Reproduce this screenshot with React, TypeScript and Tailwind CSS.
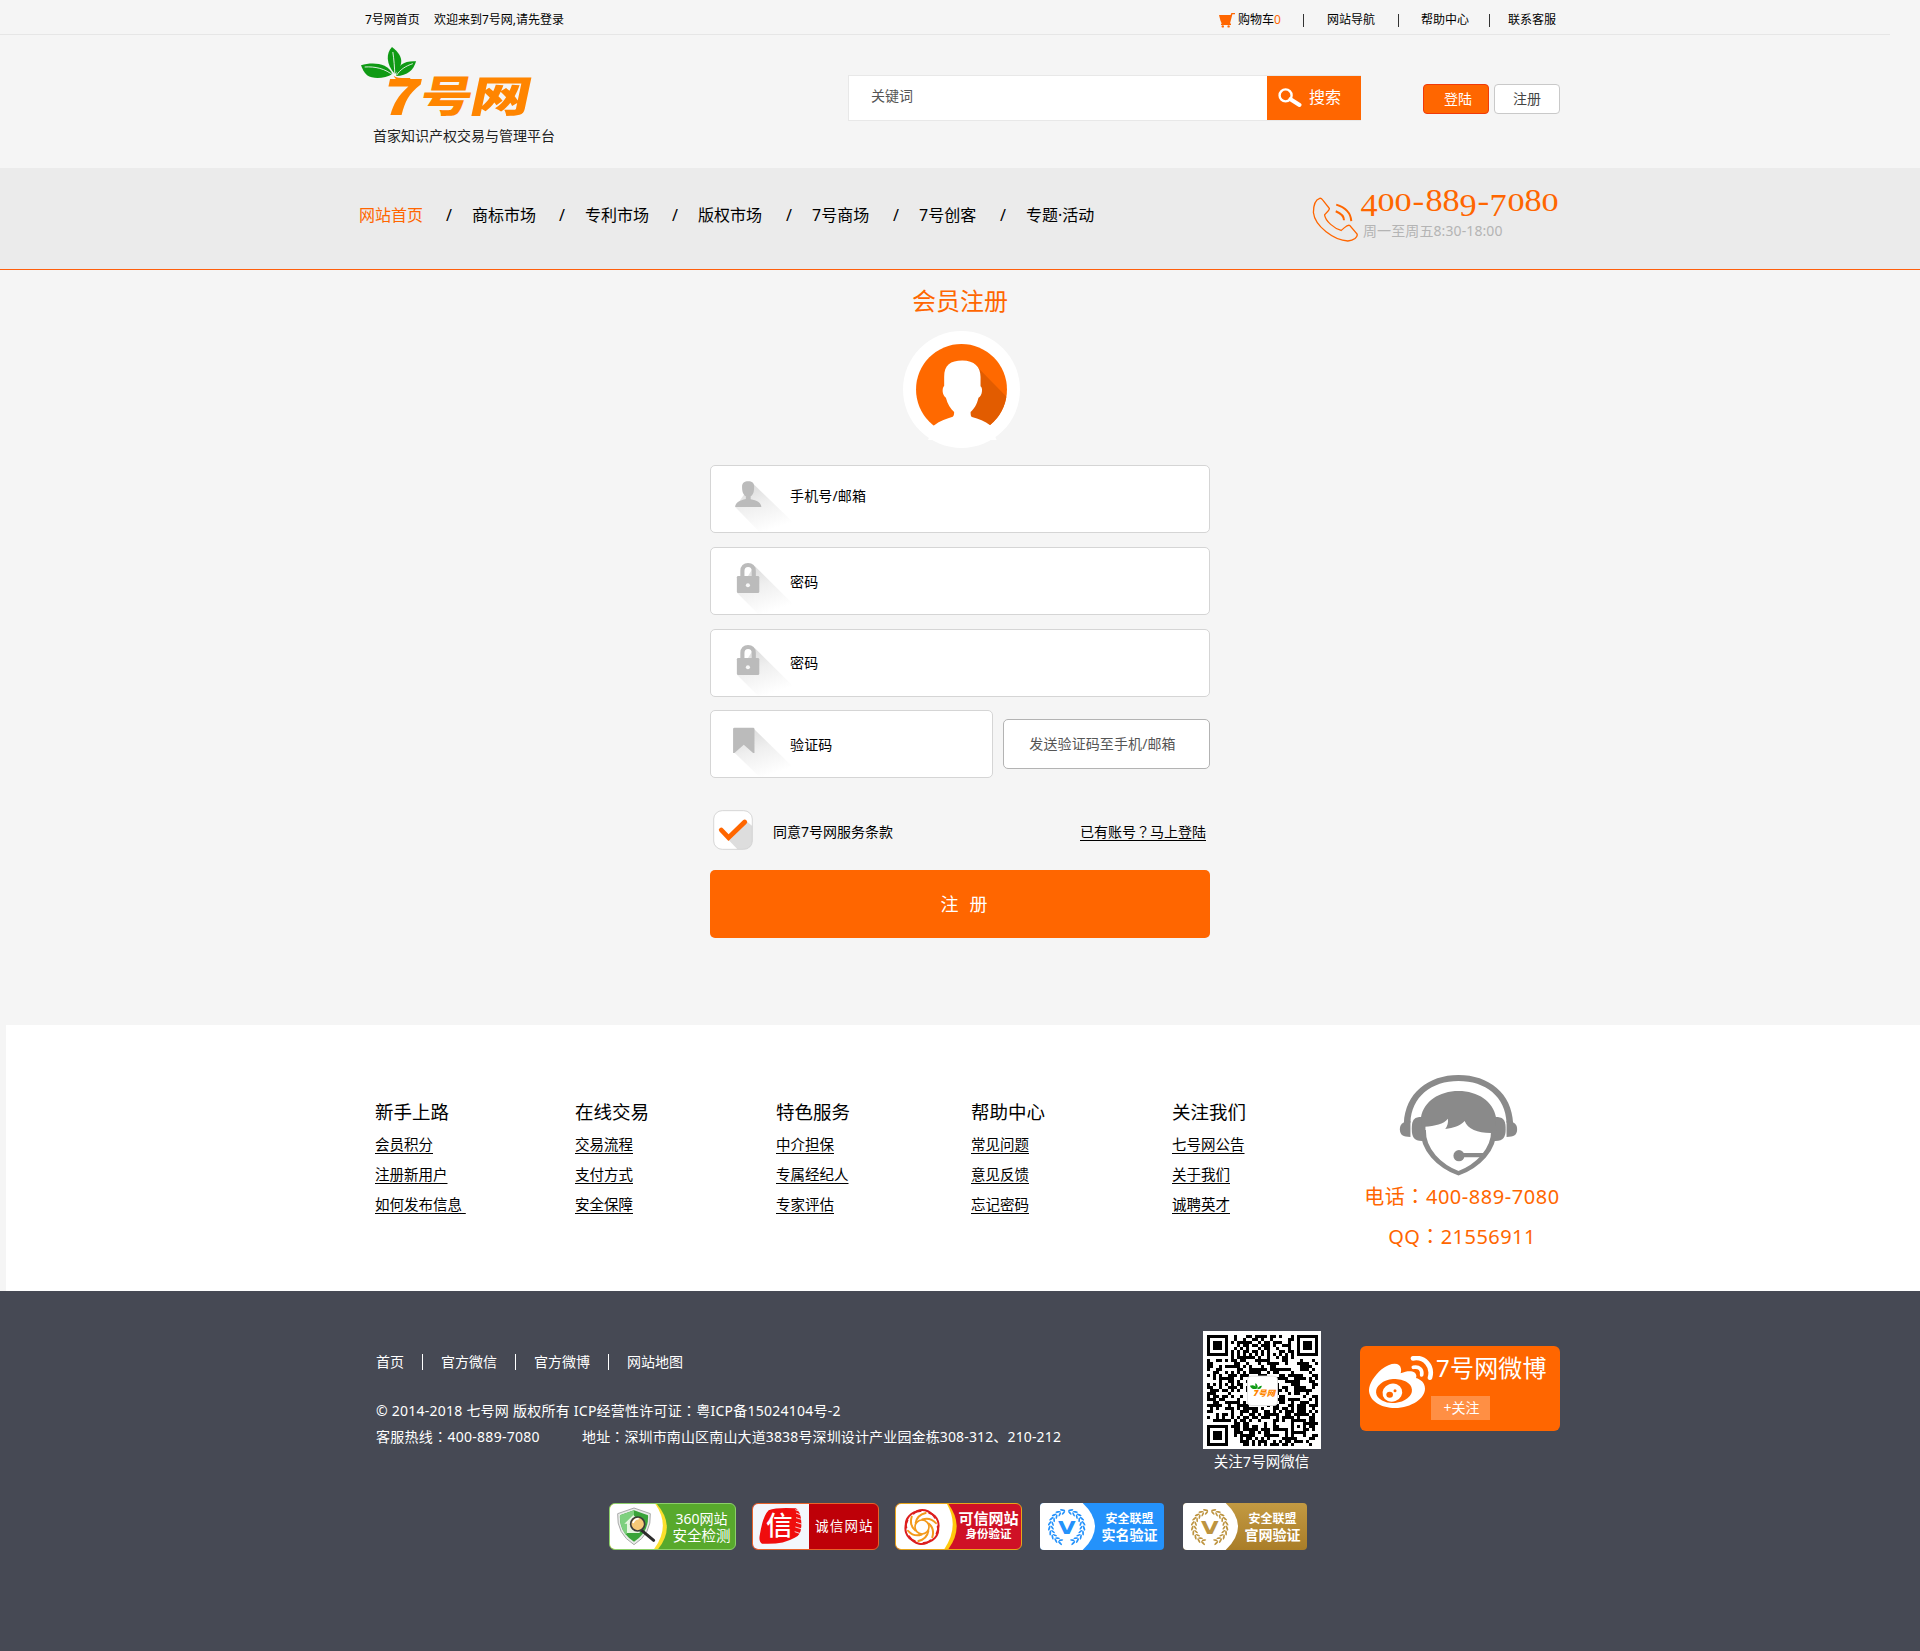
import React from "react";

const FONT = "font-['Noto_Sans','Noto_Sans_CJK_SC',sans-serif]";

function CartIcon() {
  return (
    <svg className="h-[15px] w-4" viewBox="0 0 16 15" fill="#ff6600">
      <path d="M0 2h11.6L12.4 0H16v1.2h-2.6L11 10.6h1V12H2v-1.2h.8L1.4 7.6Z" />
      <circle cx="3.8" cy="13.4" r="1.2" />
      <circle cx="9.6" cy="13.4" r="1.2" />
    </svg>
  );
}

function Leaves() {
  return (
    <svg className="absolute left-[1px] top-[12px] h-[40px] w-[70px]" viewBox="51 141 171.5 120" preserveAspectRatio="none">
      <g fill="#0f9a14">
        <path d="M51 196C78 186 116 188 128 222C110 236 80 238 66 226C58 218 54 206 51 196Z" />
        <path d="M127 141C112 160 112 192 134 222C152 198 160 172 127 141Z" />
        <path d="M186 184C158 182 138 194 137 228C165 228 180 210 186 184Z" />
      </g>
      <path d="M60 201C85 199 110 205 132 228M129 156C132 180 133 200 134 226M178 191C160 198 146 210 138 226" fill="none" stroke="#f5f5f5" strokeWidth="2.4" />
      <path d="M131 227C138 235 152 234 172 234L169 247C146 248 136 240 131 227Z" fill="#ff8500" />
    </svg>
  );
}

function SearchIcon() {
  return (
    <svg className="h-5 w-6" viewBox="0 0 24 20" fill="none" stroke="#fff">
      <ellipse cx="7.6" cy="7.4" rx="6" ry="6" strokeWidth="2.4" />
      <path d="M12.5 11.2L21.5 17" strokeWidth="4" strokeLinecap="round" />
    </svg>
  );
}

function PhoneIcon() {
  return (
    <svg className="h-[48px] w-[51px]" viewBox="990 588 105 145" preserveAspectRatio="none" fill="none" stroke="#ff6600">
      <path vectorEffect="non-scaling-stroke" strokeWidth="1.3" d="M1010 595C1000 600 997 615 997 638C1000 680 1040 722 1068 724C1080 722 1089 712 1087 703L1072 677C1067 673 1063 682 1054 692C1040 686 1022 665 1020 645C1022 640 1030 632 1030 626L1016 600C1014 596 1012 594 1010 595Z" />
      <path vectorEffect="non-scaling-stroke" strokeWidth="2" d="M1044 614C1062 622 1074 640 1075 664M1043 634C1053 640 1060 648 1060 661" />
    </svg>
  );
}

function Avatar() {
  return (
    <svg className="h-[117px] w-[117px]" viewBox="617 152 341 352" preserveAspectRatio="none">
      <defs>
        <clipPath id="disc">
          <ellipse cx="787.5" cy="328" rx="132.5" ry="137" />
        </clipPath>
      </defs>
      <ellipse cx="787.5" cy="328" rx="170.5" ry="176" fill="#fff" />
      <ellipse cx="787.5" cy="328" rx="132.5" ry="137" fill="#ff6900" />
      <path clipPath="url(#disc)" d="M835 262L930 362V450H780V330Z" fill="#e25c00" />
      <path d="M737 290C737 255 755 241 790 241C825 241 843 260 843 290V318C850 322 849 345 837 353C832 375 825 385 814 396C814 405 815 410 818 411C838 416 855 424 872 436L890 480H690L707 436C725 422 745 415 762 410C766 408 766 400 766 396C755 385 747 372 742 353C731 345 730 325 737 317Z" fill="#fff" />
    </svg>
  );
}

type FieldKind = "user" | "lock" | "bookmark";

function FieldIcon({ kind, id }: { kind: FieldKind; id: string }) {
  return (
    <svg className="h-[66px] w-[79px] shrink-0 overflow-visible" viewBox="2 3 229 198" preserveAspectRatio="none">
      <defs>
        <linearGradient id={id} gradientUnits="userSpaceOnUse" x1="115" y1="60" x2="165" y2="205">
          <stop offset="0" stopColor="#dcdcdc" />
          <stop offset="0.4" stopColor="#efefef" />
          <stop offset="0.95" stopColor="#ffffff" />
        </linearGradient>
      </defs>
      {kind === "user" && (
        <>
          <path d="M122 54L268 200H142L72 126Z" fill={`url(#${id})`} />
          <path d="M110 49C121 49 127 54 127 65C127 80 125 88 117 94V103C135 106 147 112 148 126H72C73 112 85 106 103 102V94C95 88 92 80 92 65C92 54 99 49 110 49Z" fill="#bbb" />
        </>
      )}
      {kind === "lock" && (
        <>
          <path d="M128 56L268 200H138L78 138Z" fill={`url(#${id})`} />
          <path d="M93 92V72C93 60 100 54 109.500 54C119 54 126 60 126 72V92" fill="none" stroke="#bbb" strokeWidth="12" />
          <rect x="77" y="87" width="65" height="51" rx="4" fill="#bbb" />
          <circle cx="109" cy="115" r="6" fill="#f7f7f7" />
        </>
      )}
      {kind === "bookmark" && (
        <>
          <path d="M126 56L268 200H142L70 128Z" fill={`url(#${id})`} />
          <path d="M70 53H124Q128 53 128 57V129L124 129L97 104L70 129H66V57Q66 53 70 53Z" fill="#bbb" />
        </>
      )}
    </svg>
  );
}

function CheckMark() {
  return (
    <svg className="h-10 w-10" viewBox="67 570 116 120" preserveAspectRatio="none">
      <rect x="69" y="572" width="112" height="116" rx="25" fill="#fff" />
      <path d="M162 602L181 618V664Q178 688 156 688H138L110 658Z" fill="#ddd" />
      <rect x="69" y="572" width="112" height="116" rx="25" fill="none" stroke="#d0d0d0" strokeWidth="2.500" />
      <path d="M91 630L112 653L159 606" fill="none" stroke="#ff6600" strokeWidth="14" strokeLinecap="round" />
    </svg>
  );
}

function Headset() {
  return (
    <svg className="h-[104px] w-[119px]" viewBox="1134 72 270 312" preserveAspectRatio="none" fill="#8a8a8a">
      <path d="M1145 220C1148 130 1200 75 1269 75C1338 75 1390 130 1393 220L1378 218C1376 140 1330 93 1269 93C1208 93 1162 140 1160 218Z" />
      <path d="M1160 213C1140 215 1136 225 1136 238C1136 255 1143 261 1160 261Z" />
      <path d="M1378 213C1398 215 1402 225 1402 238C1402 255 1395 261 1378 261Z" />
      <path d="M1194 201H1180C1166 203 1163 215 1163 237C1163 262 1168 272 1186 273H1194Z" />
      <path d="M1345 201H1358C1373 203 1376 215 1376 237C1376 262 1371 272 1353 273H1345Z" />
      <path d="M1184 201C1190 155 1225 123 1269 123C1313 123 1348 155 1354 201V248C1320 252 1290 240 1283 213C1272 228 1258 234 1239 237C1244 228 1246 218 1245 206C1236 222 1215 228 1192 230L1184 235Z" />
      <path d="M1189 240C1188 300 1225 347 1269 370C1313 347 1350 300 1349 240" fill="none" stroke="#8a8a8a" strokeWidth="12" />
      <ellipse cx="1270" cy="317" rx="12.500" ry="17" />
      <path d="M1275 309H1332L1324 322H1275Z" />
    </svg>
  );
}

const N = 37;

function inFinder(x: number, y: number) {
  return (x < 8 && y < 8) || (x > N - 9 && y < 8) || (x < 8 && y > N - 9);
}

function QrCode() {
  let d = "";
  for (let y = 0; y < N; y++) {
    for (let x = 0; x < N; x++) {
      const align = Math.max(Math.abs(x - 30), Math.abs(y - 30));
      if (inFinder(x, y)) continue;
      let on: boolean;
      if (align <= 2) on = align !== 1;
      else if (x === 6 || y === 6) on = (x + y) % 2 === 0;
      else {
        let h = (x * 374761393 + y * 668265263) | 0;
        h = Math.imul(h ^ (h >>> 13), 1274126177);
        on = ((h ^ (h >>> 16)) & 255) < 134;
      }
      if (on) d += `M${x} ${y}h1v1h-1z`;
    }
  }
  const finders = [
    [0, 0],
    [30, 0],
    [0, 30],
  ];
  return (
    <svg className="h-[111px] w-[111px]" viewBox="0 0 37 37">
      <path d={d} fill="#000" shapeRendering="crispEdges" />
      {finders.map(([x, y]) => (
        <g key={`${x}-${y}`}>
          <rect x={x + 0.5} y={y + 0.5} width="6" height="6" fill="none" stroke="#000" />
          <rect x={x + 2} y={y + 2} width="3" height="3" fill="#000" />
        </g>
      ))}
      <rect x="13.500" y="13.700" width="10" height="9.800" rx="1.200" fill="#fff" stroke="#ddd" strokeWidth="0.3" />
      <path d="M14.300 16.900q1.600-.6 2.300 1q-1.700.5-2.300-1zM16.200 16q1.100 1 .5 2q-.9-.9-.5-2zM18.300 16.900q-1.200 0-1.500 1.200q1.300 0 1.500-1.200z" fill="#0f9a14" />
      <text x="15.500" y="20.200" fontSize="2.600" fontWeight="900" fontStyle="italic" fill="#ff8500" textLength="7.200" lengthAdjust="spacingAndGlyphs">
        7号网
      </text>
    </svg>
  );
}

function WeiboIcon() {
  return (
    <svg className="h-[52px] w-[65px]" viewBox="567 138 195 156">
      <path d="M663 176C660 155 630 158 605 178C580 200 566 225 567 243C570 275 605 294 645 294C695 293 735 265 735 236C735 218 722 208 708 204C714 188 695 176 662 190Q664 182 663 176Z" fill="#fff" />
      <ellipse cx="642" cy="243" rx="54" ry="36" fill="#ff6600" transform="rotate(-5 642 243)" />
      <ellipse cx="637" cy="248" rx="30" ry="27" fill="#fff" transform="rotate(-20 637 248)" />
      <ellipse cx="629" cy="254" rx="10" ry="9" fill="#ff6600" />
      <circle cx="645" cy="242" r="4.500" fill="#ff6600" />
      <path d="M700 172C718 168 728 180 725 195" fill="none" stroke="#fff" strokeWidth="11" strokeLinecap="round" />
      <path d="M699 145C733 139 760 168 750 203" fill="none" stroke="#fff" strokeWidth="14" strokeLinecap="round" />
    </svg>
  );
}

function ShieldArt() {
  return (
    <svg className="h-[45px] w-[58px] shrink-0" viewBox="3 3 174 135">
      <path d="M0 0H141Q204 70 145 141H0Z" fill="#fbe02c" />
      <path d="M0 0H137Q188 70 133 141H0Z" fill="#fff" />
      <path d="M75 15L124 32Q128 92 75 125Q22 92 26 32Z" fill="#e8ece8" stroke="#9a9a9a" strokeWidth="2.500" />
      <path d="M75 22L117 37Q120 88 75 116Q30 88 33 37Z" fill="#3aa43a" />
      <path d="M75 22L33 37Q31 70 50 95L75 70Z" fill="#7fd07f" />
      <path d="M46 62L73 36L100 62H92V90H54V62Z" fill="#e6f5df" />
      <path d="M98 82L134 112" stroke="#2c2c2c" strokeWidth="9" strokeLinecap="round" />
      <circle cx="86" cy="63" r="21" fill="#f6c978" stroke="#3b3b3b" strokeWidth="5" />
      <path d="M72 60Q76 48 89 47" stroke="#fff" strokeWidth="5" fill="none" />
    </svg>
  );
}

function SealArt() {
  return (
    <svg className="h-[45px] w-[56px] shrink-0" viewBox="3 3 168 135">
      <rect width="171" height="141" fill="#f3f7fc" />
      <path d="M50 22Q75 12 132 16Q150 30 148 70Q146 100 128 104Q90 126 30 122Q20 116 23 98Q32 40 50 22Z" fill="#f00d0d" />
      <path d="M130 20L150 28M132 30L152 38M132 44L152 50M132 58L152 64M130 72L150 78M128 86L146 92" stroke="#f3f7fc" strokeWidth="2.500" />
      <text x="42" y="97" fontSize="80" fontWeight="500" fill="#fff" fontFamily="Noto Sans CJK SC">
        信
      </text>
    </svg>
  );
}

function RingArt() {
  return (
    <svg className="h-[45px] w-[62px] shrink-0" viewBox="3 3 186 135">
      <path d="M0 0H158Q212 70 158 141H0Z" fill="#ffc90c" />
      <path d="M0 0H154Q196 70 146 141H0Z" fill="#fff" />
      <g fill="none" strokeLinecap="round">
        {[0, 60, 120, 180, 240, 300].map((a) => (
          <g key={a} transform={`rotate(${a} 81 72)`}>
            <path d="M56 32Q70 18 90 22Q108 26 120 44" stroke="#dd1f1f" strokeWidth="6" />
            <path d="M62 60Q66 36 92 30" stroke="#f39a1c" strokeWidth="6" />
          </g>
        ))}
        <circle cx="81" cy="72" r="21" stroke="#f39a1c" strokeWidth="5" />
      </g>
    </svg>
  );
}

function LaurelArt({ color }: { color: string }) {
  const leaves: number[] = [];
  for (let i = 0; i < 10; i++) leaves.push(18 + i * 16);
  return (
    <svg className="h-[47px] w-[55px] shrink-0" viewBox="0 0 165 141">
      <path d="M0 0H128Q202 70 128 141H0Z" fill="#fff" />
      {[1, -1].map((s) => (
        <g key={s} transform={`translate(80 72) scale(${s} 1)`} fill={color}>
          {leaves.map((a) => (
            <g key={a} transform={`rotate(${a})`}>
              <ellipse cx="-4" cy="-52" rx="8" ry="2.800" transform="rotate(-28 -4 -52)" />
              <ellipse cx="-4" cy="-43" rx="7" ry="2.600" transform="rotate(28 -4 -43)" />
            </g>
          ))}
        </g>
      ))}
      <text x="54" y="94" fontSize="55" fontWeight="700" fill={color} fontFamily="DejaVu Sans" textLength="53" lengthAdjust="spacingAndGlyphs">
        V
      </text>
    </svg>
  );
}

/** Full-width punctuation centred in its em box. */
function Mark({ children }: { children: string }) {
  return <span className="font-['Noto_Sans_CJK_TC',sans-serif] leading-none" lang="zh-TW">{children}</span>;
}

const topLinks = [
  { label: "网站导航", box: "w-[71px]" },
  { label: "帮助中心", box: "w-[68px]" },
];

const navItems = [
  { label: "网站首页", box: "w-[87px]", active: true },
  { label: "商标市场", box: "w-[87px]" },
  { label: "专利市场", box: "w-[87px]" },
  { label: "版权市场", box: "w-[88px]" },
  { label: "7号商场", box: "w-[81px]" },
  { label: "7号创客", box: "w-[81px]" },
  { label: "专题·活动", box: "w-[87px]" },
];

const columns = [
  { title: "新手上路", box: "w-[200px]", links: ["会员积分", "注册新用户", "如何发布信息\u00a0"] },
  { title: "在线交易", box: "w-[201px]", links: ["交易流程", "支付方式", "安全保障"] },
  { title: "特色服务", box: "w-[195px]", links: ["中介担保", "专属经纪人", "专家评估"] },
  { title: "帮助中心", box: "w-[201px]", links: ["常见问题", "意见反馈", "忘记密码"] },
  { title: "关注我们", box: "w-[189px]", links: ["七号网公告", "关于我们", "诚聘英才"] },
];

const hotline: [string, string][] = [
  ["4", "translate-y-[5px]"],
  ["0", "scale-y-[0.76]"],
  ["0", "scale-y-[0.76]"],
  ["-", ""],
  ["8", ""],
  ["8", ""],
  ["9", "translate-y-[5px]"],
  ["-", ""],
  ["7", "translate-y-[5px]"],
  ["0", "scale-y-[0.76]"],
  ["8", ""],
  ["0", "scale-y-[0.76]"],
];

function Field({ kind, label, id, box, text }: { kind: FieldKind; label: string; id: string; box: string; text: string }) {
  return (
    <div className={`flex h-[68px] items-start overflow-hidden rounded-[5px] border border-[#d5d5d5] bg-white ${box}`}>
      <FieldIcon kind={kind} id={id} />
      <span className={`relative text-sm leading-5 tracking-[0.15px] text-black ${text}`}>{label}</span>
    </div>
  );
}

export default function App() {
  return (
    <div className={`h-[1651px] w-[1920px] overflow-hidden bg-[#f5f5f5] whitespace-nowrap text-black ${FONT}`}>
      <div className="h-[35px] w-[1890px] border-b border-[#e6e6e6]">
        <div className="ml-[360px] flex h-[34px] w-[1200px] items-center pt-[6px] text-xs leading-none">
          <span className="ml-[5px] w-[69px]">7号网首页</span>
          <span>欢迎来到7号网,请先登录</span>
          <div className="ml-auto flex items-center">
            <CartIcon />
            <span className="ml-[3px] w-[65px]">
              购物车<span className="text-[#ff6600]">0</span>
            </span>
            <span className="mr-[23px] h-[13px] w-px bg-[#333]" />
            {topLinks.map((l) => (
              <React.Fragment key={l.label}>
                <span className={l.box}>{l.label}</span>
                <span className={`h-[13px] w-px bg-[#333] ${l.label === "网站导航" ? "mr-[22px]" : "mr-[18px]"}`} />
              </React.Fragment>
            ))}
            <span className="w-[52px]">联系客服</span>
          </div>
        </div>
      </div>

      <header className="mx-auto flex h-[133px] w-[1200px]">
        <div className="relative w-[488px]">
          <Leaves />
          <div className="ml-[24px] mt-[37px] flex h-[42px] origin-left -skew-x-12 items-center font-['Noto_Sans_CJK_SC',sans-serif] text-[43px] leading-[42px] font-black text-[#ff8500]">
            <span className="inline-block w-[38px] origin-left scale-x-[1.45] scale-y-[1.15]">7</span>
            <span className="inline-block w-[50px] origin-left scale-x-[1.2]">号</span>
            <span className="inline-block origin-left scale-x-[1.4]">网</span>
          </div>
          <div className="ml-[13px] mt-[12px] text-sm leading-5 text-[#222]">首家知识产权交易与管理平台</div>
        </div>
        <div className="mt-10 flex h-[46px] w-[513px] border border-r-0 border-[#e8e8e8] bg-white">
          <span className="w-[418px] pt-[10px] pl-[22px] text-sm leading-5 text-[#555]">关键词</span>
          <button className="flex h-11 w-[94px] items-center bg-[#ff6600] pl-[11px] text-base leading-none text-white">
            <SearchIcon />
            <span className="-mt-[2px] ml-[7px]">搜索</span>
          </button>
        </div>
        <div className="mt-[49px] ml-[62px] flex gap-[5px] text-sm leading-none">
          <button className="h-[30px] w-[66px] rounded border border-[#f03a0a] bg-[#ff6600] pl-[4px] text-white">登陆</button>
          <button className="h-[30px] w-[66px] rounded border border-[#c9c9c9] bg-white text-[#444]">注册</button>
        </div>
      </header>

      <nav className="h-[102px] border-b border-[#ff5f0c] bg-[#ebebeb]">
        <div className="mx-auto flex h-[100px] w-[1200px]">
          <div className="-ml-px flex w-[951px] pt-[35px] text-base leading-6">
            {navItems.map((item, i) => (
              <React.Fragment key={item.label}>
                {i > 0 && <span className="w-[26px]">/</span>}
                <span className={`${item.box} ${item.active ? "text-[#ff6600]" : ""}`}>{item.label}</span>
              </React.Fragment>
            ))}
          </div>
          <div className="mt-7">
            <PhoneIcon />
          </div>
          <div className="-ml-px mt-[14px]">
            <div className="flex h-9 items-center font-['Liberation_Serif',serif] text-[32px] leading-9 text-[#ff6600]">
              {hotline.map(([c, shape], i) => (
                <span key={i} className={c === "-" ? "w-[13px] text-center" : "w-[17.3px] text-center"}>
                  <span className={`inline-block origin-[50%_78%] ${c === "-" ? "scale-x-[1.1]" : "scale-x-[1.07]"} ${shape}`}>{c}</span>
                </span>
              ))}
            </div>
            <div className="mt-[3px] ml-[3px] text-sm leading-5 tracking-[0.1px] text-[#b4b4b4]">周一至周五8:30-18:00</div>
          </div>
        </div>
      </nav>

      <main className="mx-auto flex h-[755px] w-[500px] flex-col">
        <h1 className="mt-[13px] text-center text-2xl leading-9 text-[#ff6600]">会员注册</h1>
        <div className="mt-[12px] flex h-[118px] justify-center pl-[2px]">
          <Avatar />
        </div>
        <div className="mt-4 flex flex-col gap-[14px]">
          <Field kind="user" id="shade-user" label="手机号/邮箱" box="w-[500px]" text="mt-[20px]" />
          <Field kind="lock" id="shade-lock-1" label="密码" box="w-[500px]" text="mt-[24px]" />
          <Field kind="lock" id="shade-lock-2" label="密码" box="w-[500px]" text="mt-[23px]" />
        </div>
        <div className="mt-[13px] flex gap-[10px]">
          <Field kind="bookmark" id="shade-mark" label="验证码" box="w-[283px]" text="mt-[24px]" />
          <button className="mt-[9px] h-[50px] w-[207px] rounded-[5px] border border-[#b3b3b3] bg-white pr-2 text-sm tracking-[0.1px] text-[#555]">发送验证码至手机/邮箱</button>
        </div>
        <div className="mt-8 flex h-10 items-center pr-1 pl-[3px] text-sm leading-5">
          <CheckMark />
          <span className="mt-[3px] ml-[20px]">同意7号网服务条款</span>
          <a className="mt-[3px] ml-auto underline underline-offset-[3px]">
            已有账号<Mark>？</Mark>马上登陆
          </a>
        </div>
        <button className="mt-5 flex h-[68px] shrink-0 items-center justify-center gap-[11px] rounded-[5px] bg-[#ff6600] pl-2 text-lg leading-none text-white">
          <span>注</span>
          <span>册</span>
        </button>
      </main>

      <section className="ml-[6px] h-[266px] bg-white">
        <div className="ml-[354px] flex w-[1200px] pt-[49px] pl-[15px]">
          {columns.map((c) => (
            <div key={c.title} className={`pt-6 ${c.box}`}>
              <h2 className="text-[18.5px] leading-7">{c.title}</h2>
              <ul className="mt-[3px] text-[14.5px] leading-[30px]">
                {c.links.map((l) => (
                  <li key={l}>
                    <a className="underline underline-offset-[3px]">{l}</a>
                  </li>
                ))}
              </ul>
            </div>
          ))}
          <div className="flex w-[199px] flex-col items-center text-xl text-[#ff6600]">
            <div className="mr-[4px]">
              <Headset />
            </div>
            <div className="mt-px ml-[3px] tracking-[0.55px] leading-9">
              电话<Mark>：</Mark>400-889-7080
            </div>
            <div className="mt-1 ml-[3px] tracking-[0.45px] leading-9">
              QQ<Mark>：</Mark>21556911
            </div>
          </div>
        </div>
      </section>

      <footer className="h-[360px] bg-[#464954] text-sm text-white">
        <div className="mx-auto flex h-[212px] w-[1200px]">
          <div className="w-[843px] pt-[61px] pl-4">
            <div className="flex items-center leading-5">
              <span className="w-[46px]">首页</span>
              <span className="mr-[18px] h-4 w-px bg-white" />
              <span className="w-[74px]">官方微信</span>
              <span className="mr-[18px] h-4 w-px bg-white" />
              <span className="w-[74px]">官方微博</span>
              <span className="mr-[18px] h-4 w-px bg-white" />
              <span>网站地图</span>
            </div>
            <p className="mt-[29px] leading-5 tracking-[0.24px]">
              © 2014-2018 七号网 版权所有 ICP经营性许可证<Mark>：</Mark>粤ICP备15024104号-2
            </p>
            <p className="mt-[6px] flex leading-5">
              <span className="w-[206px] tracking-[0.28px]">
                客服热线<Mark>：</Mark>400-889-7080
              </span>
              <span className="tracking-[0.14px]">
                地址<Mark>：</Mark>深圳市南山区南山大道3838号深圳设计产业园金栋308-312、210-212
              </span>
            </p>
          </div>
          <div className="flex w-[118px] flex-col items-center pt-10">
            <div className="flex h-[118px] w-[118px] items-center justify-center bg-white">
              <QrCode />
            </div>
            <span className="mt-[2px] mr-px text-[14.5px] leading-5">关注7号网微信</span>
          </div>
          <div className="mt-[55px] ml-[39px] flex h-[85px] w-[200px] rounded-md bg-[#ff6600] pt-[10px] pl-[9px]">
            <WeiboIcon />
            <div className="-mt-[6px]">
              <div className="ml-[2px] text-2xl leading-9 tracking-[0.2px]">7号网微博</div>
              <button className="mt-[10px] -ml-[3px] block h-6 w-[59px] bg-[#ff8f44] pl-[2px] leading-5">+关注</button>
            </div>
          </div>
        </div>

        <div className="ml-[609px] flex h-[47px] w-[700px]">
          <div className="mr-4 flex w-[127px] overflow-hidden rounded-md border border-[#8ccf6a] bg-[#58a92c]">
            <ShieldArt />
            <div className="flex-1 pt-[7px] text-center leading-4">
              <div>360网站</div>
              <div className="text-[14.5px]">安全检测</div>
            </div>
          </div>
          <div className="mr-4 flex w-[127px] items-center overflow-hidden rounded-md border border-[#e8622a] bg-[#be0008]">
            <SealArt />
            <span className="pl-[6px] text-[13.5px] tracking-[1.2px]">诚信网站</span>
          </div>
          <div className="mr-[18px] flex w-[127px] overflow-hidden rounded-md border border-[#e8a51a] bg-[#cf1126] font-bold">
            <RingArt />
            <div className="-ml-[2px] flex-1 pt-[6px] text-center leading-4">
              <div className="text-[15px]">可信网站</div>
              <div className="text-[11.500px]">身份验证</div>
            </div>
          </div>
          <div className="mr-[19px] flex w-[124px] overflow-hidden rounded-sm bg-[#2492fb] font-bold">
            <LaurelArt color="#2492fb" />
            <div className="flex-1 pt-2 text-center leading-[15px]">
              <div className="text-xs">安全联盟</div>
              <div>实名验证</div>
            </div>
          </div>
          <div className="flex w-[124px] overflow-hidden rounded-sm bg-gradient-to-b from-[#c39a42] to-[#a97d28] font-bold">
            <LaurelArt color="#bd9440" />
            <div className="flex-1 pt-2 text-center leading-[15px]">
              <div className="text-xs">安全联盟</div>
              <div>官网验证</div>
            </div>
          </div>
        </div>
      </footer>
    </div>
  );
}
